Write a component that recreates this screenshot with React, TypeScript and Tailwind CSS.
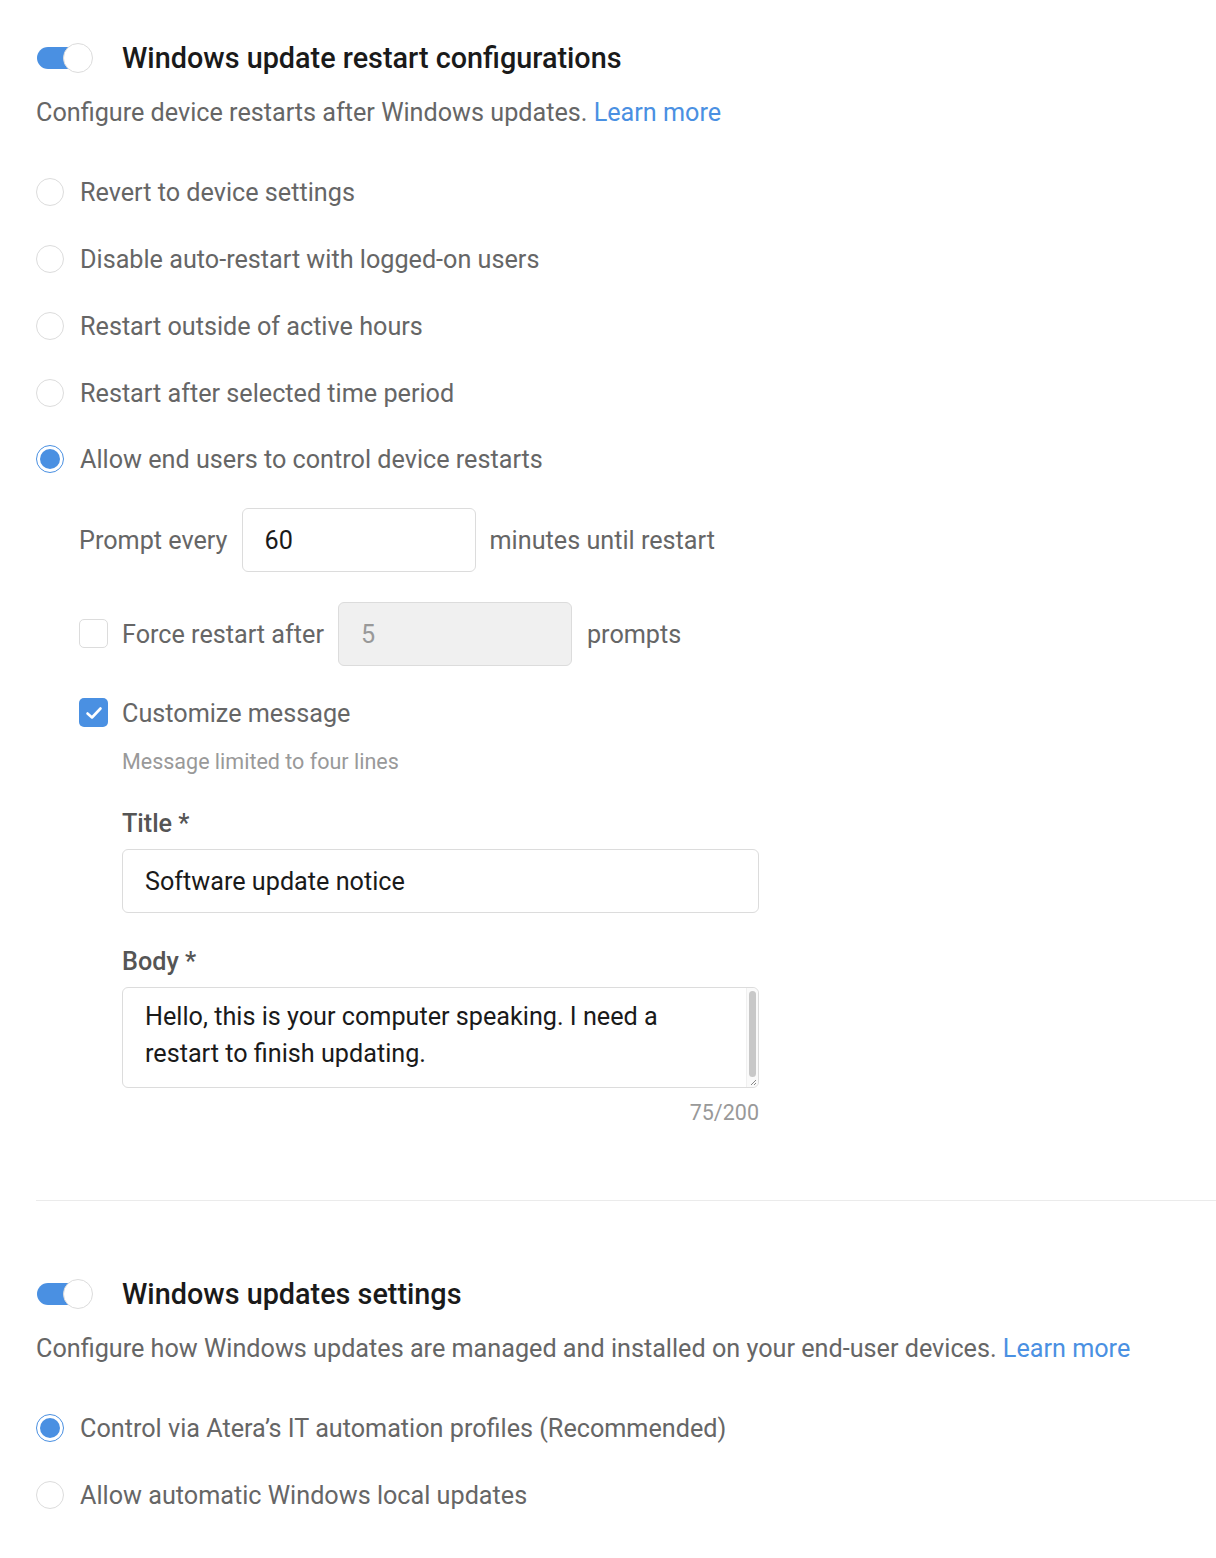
import React from "react";

const font = { fontFamily: "Roboto, 'Noto Sans', Arial, sans-serif" };

function Toggle() {
  return (
    <div className="relative w-[57px] h-[30px] shrink-0">
      <div className="absolute left-[1px] top-[4px] h-[22px] w-[48px] rounded-full bg-[#4a90e2]" />
      <div className="absolute right-0 top-0 h-[30px] w-[30px] rounded-full bg-white border border-[#dcdcdc]" />
    </div>
  );
}

function Radio({ checked, label }: { checked?: boolean; label: string }) {
  return (
    <div className="flex items-center h-[66.75px]">
      {checked ? (
        <div className="w-[28px] h-[28px] rounded-full border-[1.5px] border-[#4a90e2] p-[3px] shrink-0">
          <div className="w-full h-full rounded-full bg-[#4a90e2]" />
        </div>
      ) : (
        <div className="w-[28px] h-[28px] rounded-full border border-[#dcdcdc] bg-white shrink-0" />
      )}
      <span className="ml-[16px] pt-[2px] text-[25.2px] leading-[32px] text-[#666666]">{label}</span>
    </div>
  );
}

export default function App() {
  return (
    <div className="bg-white w-[1216px] min-h-[1558px] pl-[36px] pt-[38px] pb-[29px]" style={font}>
      {/* Section 1 */}
      <div className="flex items-center h-[40px]">
        <Toggle />
        <h2 className="ml-[29px] text-[28.8px] leading-[40px] font-medium text-[#1a1a1a]">
          Windows update restart configurations
        </h2>
      </div>
      <p className="mt-[19px] text-[25.2px] leading-[32px] text-[#666666]">
        Configure device restarts after Windows updates.{" "}
        <span className="text-[#4a90e2]">Learn more</span>
      </p>

      <div className="mt-[30px]">
        <Radio label="Revert to device settings" />
        <Radio label="Disable auto-restart with logged-on users" />
        <Radio label="Restart outside of active hours" />
        <Radio label="Restart after selected time period" />
        <Radio checked label="Allow end users to control device restarts" />
      </div>

      <div className="pl-[43px]">
        <div className="mt-[15px] flex items-center h-[64px]">
          <span className="pt-[2px] text-[25.2px] leading-[32px] text-[#666666]">Prompt every</span>
          <div className="ml-[14px] w-[234px] h-[64px] rounded-[6px] border border-[#dcdcdc] bg-white flex items-center pl-[22px] pt-[2px] text-[25.2px] text-[#1a1a1a]">
            60
          </div>
          <span className="ml-[14px] pt-[2px] text-[25.2px] leading-[32px] text-[#666666]">minutes until restart</span>
        </div>

        <div className="mt-[30px] flex items-center h-[64px]">
          <div className="w-[29px] h-[29px] rounded-[5px] border border-[#dcdcdc] bg-white shrink-0" />
          <span className="ml-[14px] pt-[2px] text-[25.2px] leading-[32px] text-[#666666]">Force restart after</span>
          <div className="ml-[14px] w-[234px] h-[64px] rounded-[6px] border border-[#dcdcdc] bg-[#f0f0f0] flex items-center pl-[22px] pt-[2px] text-[25.2px] text-[#999999]">
            5
          </div>
          <span className="ml-[15px] pt-[2px] text-[25.2px] leading-[32px] text-[#666666]">prompts</span>
        </div>

        <div className="mt-[27px] flex items-center h-[40px]">
          <div className="w-[29px] h-[29px] rounded-[5px] bg-[#4a90e2] flex items-center justify-center shrink-0">
            <svg width="22" height="22" viewBox="0 0 22 22" fill="none">
              <path d="M4.5 11.5 L9 15.5 L17.5 6.5" stroke="white" strokeWidth="2.6" strokeLinecap="round" strokeLinejoin="round" />
            </svg>
          </div>
          <span className="ml-[14px] pt-[2px] text-[25.2px] leading-[32px] text-[#666666]">Customize message</span>
        </div>

        <div className="pl-[43px]">
          <p className="mt-[15px] text-[21.5px] leading-[28px] text-[#999999]">Message limited to four lines</p>

          <p className="mt-[31px] pt-[1px] text-[25.2px] leading-[32px] font-medium text-[#555555]">Title *</p>
          <div className="mt-[9px] w-[637px] h-[64px] rounded-[6px] border border-[#dcdcdc] bg-white flex items-center pl-[22px] pt-[2px] text-[25.2px] text-[#1a1a1a]">
            Software update notice
          </div>

          <p className="mt-[32px] pt-[1px] text-[25.2px] leading-[32px] font-medium text-[#555555]">Body *</p>
          <div className="mt-[9px] w-[637px] h-[101px] rounded-[6px] border border-[#dcdcdc] bg-white flex">
            <div className="flex-1 pl-[22px] pr-[60px] pt-[10px] text-[25.2px] leading-[37px] text-[#1a1a1a]">
              Hello, this is your computer speaking. I need a restart to finish updating.
            </div>
            <div className="relative w-[12px] shrink-0 bg-[#fafafa] border-l border-[#f0f0f0] rounded-r-[6px]">
              <div className="absolute left-[2px] top-[3px] w-[7px] h-[86px] rounded-full bg-[#c8c8c8]" />
              <svg className="absolute right-[1px] bottom-[1px]" width="8" height="8" viewBox="0 0 8 8">
                <path d="M7 2 L2 7 M7 5 L5 7" stroke="#888" strokeWidth="1" />
              </svg>
            </div>
          </div>
          <p className="mt-[11px] w-[637px] text-right text-[21.5px] leading-[28px] text-[#999999]">75/200</p>
        </div>
      </div>

      <div className="mt-[73px] h-px bg-[#ebebeb]" />

      {/* Section 2 */}
      <div className="mt-[73px] flex items-center h-[40px]">
        <Toggle />
        <h2 className="ml-[29px] text-[28.8px] leading-[40px] font-medium text-[#1a1a1a]">
          Windows updates settings
        </h2>
      </div>
      <p className="mt-[19px] text-[25.2px] leading-[32px] text-[#666666]">
        Configure how Windows updates are managed and installed on your end-user devices.{" "}
        <span className="text-[#4a90e2]">Learn more</span>
      </p>

      <div className="mt-[30px]">
        <Radio checked label="Control via Atera’s IT automation profiles (Recommended)" />
        <Radio label="Allow automatic Windows local updates" />
      </div>
    </div>
  );
}
